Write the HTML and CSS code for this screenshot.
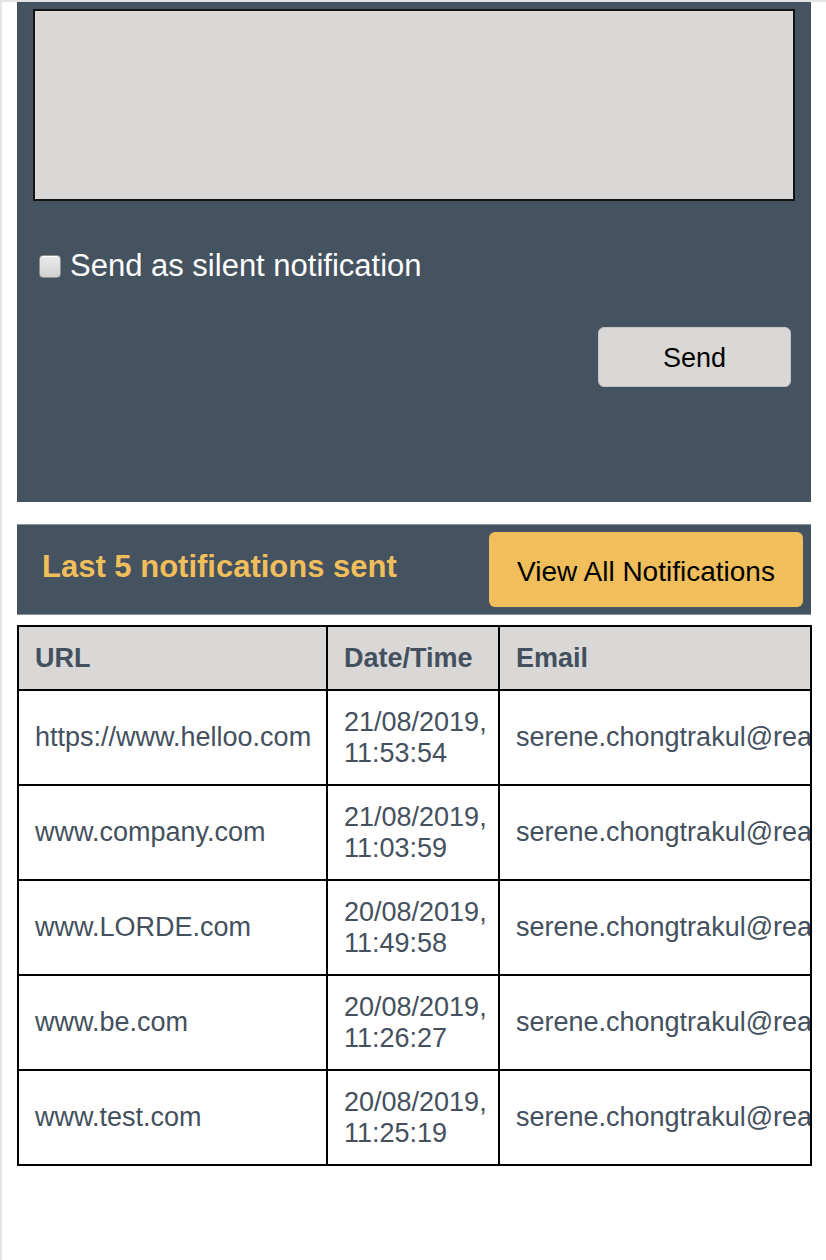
FILE: index.html
```html
<!DOCTYPE html>
<html lang="en">
<head>
<meta charset="utf-8">
<title>Notifications</title>
<link rel="stylesheet" href="styles.css">
</head>
<body>
<div class="page">
  <section class="compose">
    <textarea class="message"></textarea>
    <label class="silent">
      <input type="checkbox" class="check">
      <span>Send as silent notification</span>
    </label>
    <div class="send-row">
      <button class="send-btn" type="button">Send</button>
    </div>
  </section>

  <section class="recent-bar">
    <h2 class="recent-title">Last 5 notifications sent</h2>
    <button class="view-all" type="button">View All Notifications</button>
  </section>

  <table class="log">
    <colgroup>
      <col class="c-url">
      <col class="c-date">
      <col class="c-email">
    </colgroup>
    <thead>
      <tr><th>URL</th><th>Date/Time</th><th>Email</th></tr>
    </thead>
    <tbody>
      <tr><td>https://www.helloo.com</td><td>21/08/2019, 11:53:54</td><td class="email">serene.chongtrakul@realestate.com.au</td></tr>
      <tr><td>www.company.com</td><td>21/08/2019, 11:03:59</td><td class="email">serene.chongtrakul@realestate.com.au</td></tr>
      <tr><td>www.LORDE.com</td><td>20/08/2019, 11:49:58</td><td class="email">serene.chongtrakul@realestate.com.au</td></tr>
      <tr><td>www.be.com</td><td>20/08/2019, 11:26:27</td><td class="email">serene.chongtrakul@realestate.com.au</td></tr>
      <tr><td>www.test.com</td><td>20/08/2019, 11:25:19</td><td class="email">serene.chongtrakul@realestate.com.au</td></tr>
    </tbody>
  </table>
</div>
</body>
</html>
```

FILE: styles.css
```css
html, body {
  margin: 0;
  padding: 0;
  background: #ffffff;
}

body {
  font-family: "Liberation Sans", Arial, Helvetica, sans-serif;
}

.page {
  box-sizing: border-box;
  min-height: 1260px;
  border-top: 2px solid #e4e4e4;
  border-left: 2px solid #e4e4e4;
  padding: 0 15px;
}

/* Compose panel */
.compose {
  box-sizing: border-box;
  width: 794px;
  height: 500px;
  background: #455260;
  padding: 7px 16px 0;
}

.message {
  display: block;
  box-sizing: border-box;
  width: 762px;
  height: 192px;
  margin: 0;
  border: 2px solid #141414;
  background: #d9d8d6;
  resize: none;
  font-family: inherit;
}

.silent {
  display: flex;
  align-items: center;
  gap: 9px;
  margin: 47px 0 0 6px;
  height: 36px;
  color: #ffffff;
  font-size: 31px;
  line-height: 36px;
}

.check {
  -webkit-appearance: none;
  appearance: none;
  box-sizing: border-box;
  width: 22px;
  height: 23px;
  margin: 0;
  border: 1px solid #8f8f8f;
  border-radius: 4px;
  background: linear-gradient(#ececec, #d2d2d2);
  box-shadow: inset 0 1px 0 #ffffff;
}

.send-row {
  display: flex;
  justify-content: flex-end;
  padding-right: 4px;
  margin-top: 43px;
}

.send-btn {
  box-sizing: border-box;
  width: 193px;
  height: 60px;
  border: 1px solid #c4c4c4;
  border-radius: 6px;
  background: #d9d8d6;
  color: #000000;
  font-family: inherit;
  font-size: 27px;
  padding: 2px 0 0;
}

/* Recent bar */
.recent-bar {
  box-sizing: border-box;
  width: 794px;
  height: 91px;
  margin-top: 22px;
  background: #455260;
  border-top: 1px solid #8a939d;
  border-bottom: 1px solid #8a939d;
  display: flex;
  align-items: center;
  justify-content: space-between;
  padding: 0 8px 0 25px;
}

.recent-title {
  margin: 0 0 6px;
  color: #f0be5a;
  font-size: 31px;
  font-weight: bold;
  line-height: 36px;
}

.view-all {
  box-sizing: border-box;
  width: 314px;
  height: 75px;
  border: none;
  border-radius: 6px;
  background: #f0be5a;
  color: #000000;
  font-family: inherit;
  font-size: 28px;
  padding: 4px 0 0;
}

/* Table */
.log {
  margin-top: 10px;
  width: 793px;
  table-layout: fixed;
  border-collapse: collapse;
  border: 2px solid #000000;
  color: #44505e;
  font-size: 27px;
}

.c-url { width: 309px; }
.c-date { width: 172px; }
.c-email { width: 312px; }

.log th,
.log td {
  border: 2px solid #000000;
  text-align: left;
  vertical-align: middle;
  padding: 15.5px 16px;
  line-height: 31px;
}

.log th {
  background: #d9d8d6;
  font-weight: bold;
}

.log td {
  background: #ffffff;
  font-weight: normal;
}

.log td.email {
  white-space: nowrap;
  overflow: hidden;
}
```
